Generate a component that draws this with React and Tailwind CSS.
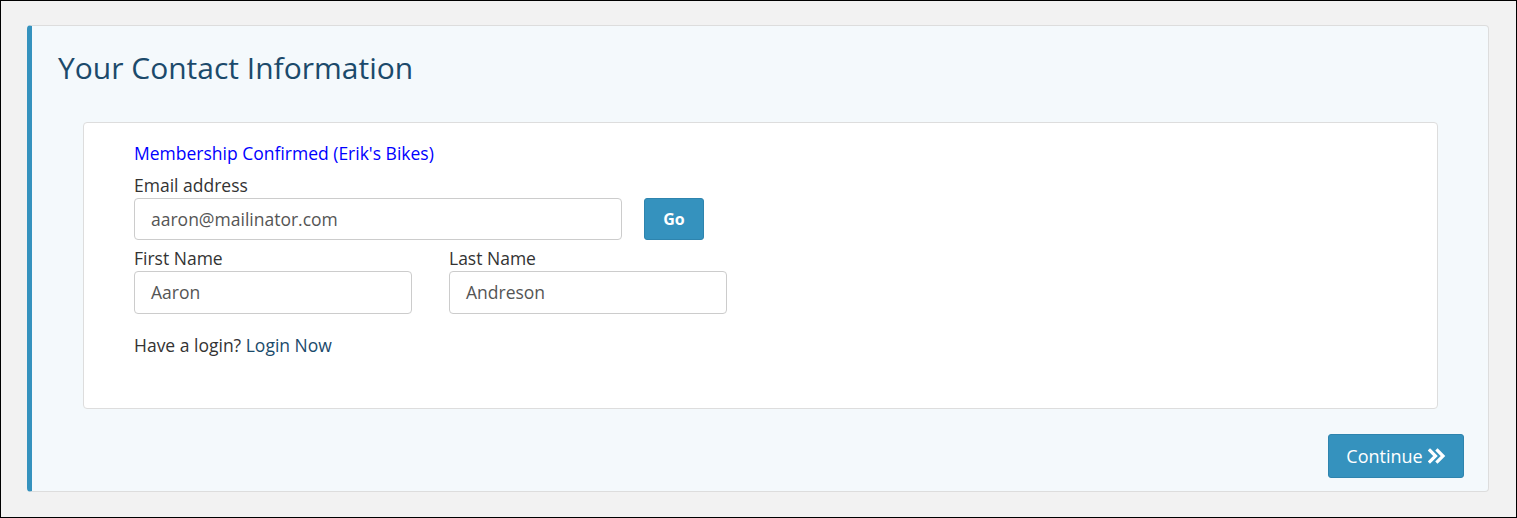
import React from "react";

function Chevrons() {
  return (
    <svg width="18" height="16" viewBox="0 0 18 16" className="ml-[5px]">
      <path d="M2 2.5 L7.5 8 L2 13.5" fill="none" stroke="white" strokeWidth="3.2" strokeLinecap="square" strokeLinejoin="miter" />
      <path d="M9.5 2.5 L15 8 L9.5 13.5" fill="none" stroke="white" strokeWidth="3.2" strokeLinecap="square" strokeLinejoin="miter" />
    </svg>
  );
}

export default function App() {
  return (
    <div
      className="w-[1517px] h-[518px] border border-black bg-[#f2f2f2] pt-[24px] pl-[26px] pr-[27px]"
      style={{ fontFamily: '"Open Sans", "Liberation Sans", sans-serif' }}
    >
      <div className="h-[467px] bg-[#f4f9fc] border border-[#dddddd] border-l-[5px] border-l-[#3592be] rounded-[4px] flex flex-col">
        <h1 className="text-[30px] leading-[40px] text-[#1b4a6b] pl-[26px] pt-[22px] font-normal">
          Your Contact Information
        </h1>
        <div className="ml-[51px] mr-[50px] mt-[34px] h-[287px] bg-white border border-[#dddddd] rounded-[4px] pl-[50px] pt-[19px]">
          <div className="text-[17.5px] leading-[22px] text-[#0000ff]">Membership Confirmed (Erik's Bikes)</div>
          <div className="text-[17.5px] leading-[22px] text-[#333333] mt-[10px]">Email address</div>
          <div className="flex items-center mt-[2px]">
            <div className="w-[488px] h-[42px] border border-[#cccccc] rounded-[4px] flex items-center pl-[16px] text-[17.5px] text-[#555555]">
              aaron@mailinator.com
            </div>
            <button className="ml-[22px] w-[60px] h-[42px] bg-[#3592be] border border-[#2e84ae] rounded-[3px] text-white text-[16px] font-bold">
              Go
            </button>
          </div>
          <div className="flex mt-[7px]">
            <div className="w-[278px]">
              <div className="text-[17.5px] leading-[22px] text-[#333333]">First Name</div>
              <div className="mt-[2px] h-[43px] border border-[#cccccc] rounded-[4px] flex items-center pl-[16px] text-[17.5px] text-[#555555]">
                Aaron
              </div>
            </div>
            <div className="w-[278px] ml-[37px]">
              <div className="text-[17.5px] leading-[22px] text-[#333333]">Last Name</div>
              <div className="mt-[2px] h-[43px] border border-[#cccccc] rounded-[4px] flex items-center pl-[16px] text-[17.5px] text-[#555555]">
                Andreson
              </div>
            </div>
          </div>
          <div className="text-[17.5px] leading-[22px] text-[#333333] mt-[20px]">
            Have a login? <span className="text-[#1b4a6b]">Login Now</span>
          </div>
        </div>
        <div className="flex justify-end pr-[24px] mt-[25px]">
          <button className="w-[136px] h-[44px] bg-[#3592be] border border-[#2e84ae] rounded-[3px] text-white text-[18px] flex items-center justify-center">
            Continue
            <Chevrons />
          </button>
        </div>
      </div>
    </div>
  );
}
